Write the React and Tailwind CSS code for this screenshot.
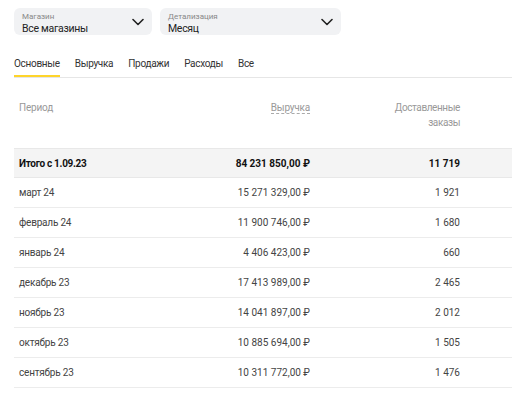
import React from "react";

const rows = [
  ["март 24", "15 271 329,00 ₽", "1 921"],
  ["февраль 24", "11 900 746,00 ₽", "1 680"],
  ["январь 24", "4 406 423,00 ₽", "660"],
  ["декабрь 23", "17 413 989,00 ₽", "2 465"],
  ["ноябрь 23", "14 041 897,00 ₽", "2 012"],
  ["октябрь 23", "10 885 694,00 ₽", "1 505"],
  ["сентябрь 23", "10 311 772,00 ₽", "1 476"],
];

function Chevron() {
  return (
    <svg width="12" height="8" viewBox="0 0 12 8" fill="none">
      <path d="M1 1.5 L6 6.5 L11 1.5" stroke="#222" strokeWidth="1.6" strokeLinecap="round" strokeLinejoin="round" />
    </svg>
  );
}

function Select({ label, value, width }) {
  return (
    <div className={`flex items-center justify-between rounded-[6px] bg-[#f1f2f4] pl-[8px] pr-[8px] h-[27px] ${width}`}>
      <div className="flex flex-col pt-[3px]">
        <span className="text-[8px] text-[#888] leading-[10px]">{label}</span>
        <span className="text-[10.5px] tracking-[-0.3px] text-[#222] leading-[13px]">{value}</span>
      </div>
      <Chevron />
    </div>
  );
}

export default function App() {
  const tabs = ["Основные", "Выручка", "Продажи", "Расходы", "Все"];
  return (
    <div className="w-[512px] h-[396px] bg-white overflow-hidden" style={{ fontFamily: 'Roboto, "Noto Sans", sans-serif' }}>
      <div className="flex gap-[8px] pl-[14px] pt-[8px]">
        <Select label="Магазин" value="Все магазины" width="w-[138px]" />
        <Select label="Детализация" value="Месяц" width="w-[181px]" />
      </div>
      <div className="ml-[14px] mt-[8px] flex gap-[15px] border-b border-[#e6e6e6] h-[35px]">
        {tabs.map((t, i) => (
          <div key={t} className={`flex items-center text-[10px] tracking-[-0.3px] text-[#333] pt-[8px] ${i === 0 ? "border-b-2 border-[#fed42b]" : "border-b-2 border-transparent"}`}>
            {t}
          </div>
        ))}
      </div>
      <div className="ml-[14px]">
        <div className="flex h-[70px] pt-[22px] text-[10px] text-[#999] leading-[15px]">
          <div className="w-[176px] pl-[5px] tracking-[-0.2px]">Период</div>
          <div className="w-[120px] text-right">
            <span className="border-b border-dashed border-[#aaa] tracking-[-0.2px]">Выручка</span>
          </div>
          <div className="w-[150px] text-right tracking-[-0.4px]">
            Доставленные<br />заказы
          </div>
        </div>
        <div className="flex h-[30px] items-center bg-[#f4f4f4] border-y border-[#e8e8e8] text-[10px] font-bold text-[#111]">
          <div className="w-[176px] pl-[5px] tracking-[-0.3px]">Итого с 1.09.23</div>
          <div className="w-[120px] text-right">84 231 850,00 ₽</div>
          <div className="w-[150px] text-right">11 719</div>
        </div>
        {rows.map(([p, r, o]) => (
          <div key={p} className="flex h-[30px] items-center border-b border-[#ececec] text-[10px] text-[#444]">
            <div className="w-[176px] pl-[5px] tracking-[-0.2px]">{p}</div>
            <div className="w-[120px] text-right">{r}</div>
            <div className="w-[150px] text-right">{o}</div>
          </div>
        ))}
      </div>
    </div>
  );
}
